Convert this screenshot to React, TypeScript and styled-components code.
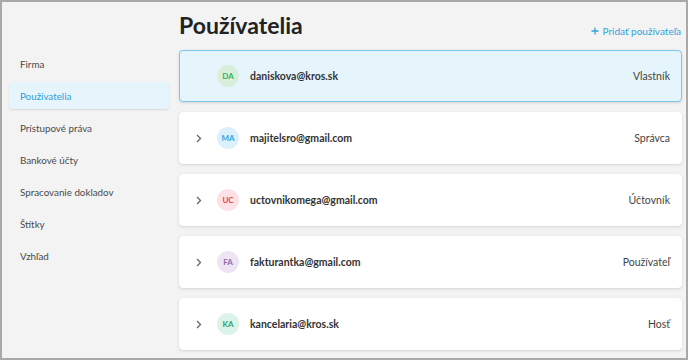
import React from "react";
import styled, { createGlobalStyle } from "styled-components";

const Global = createGlobalStyle`
  html, body { margin: 0; padding: 0; background: #ffffff; }
  * { box-sizing: border-box; }
  body { font-family: Lato, "Noto Sans", sans-serif; }
`;

const Frame = styled.div`
  width: 688px;
  height: 360px;
  border: 2px solid #a9a9a9;
  background: #f3f3f3;
  display: flex;
  overflow: hidden;
`;

const Sidebar = styled.nav`
  width: 168px;
  padding: 48px 0 0 7px;
  display: flex;
  flex-direction: column;
  gap: 5px;
`;

const NavItem = styled.div<{ $active?: boolean }>`
  width: 160px;
  height: 27px;
  display: flex;
  align-items: center;
  padding-left: 11px;
  font-size: 9.8px;
  font-weight: 400;
  color: ${(p) => (p.$active ? "#2a9fd8" : "#4a4a4a")};
  background: ${(p) => (p.$active ? "#e6f4fc" : "transparent")};
  border-radius: 3px;
  box-shadow: ${(p) => (p.$active ? "0 1px 2px rgba(0,0,0,0.12)" : "none")};
`;

const Main = styled.main`
  flex: 1;
  padding: 0 4px 0 9px;
  display: flex;
  flex-direction: column;
`;

const Header = styled.div`
  height: 48px;
  display: flex;
  align-items: flex-end;
  justify-content: space-between;
  padding-bottom: 13px;
`;

const Title = styled.h1`
  margin: 0;
  font-size: 23px;
  font-weight: 700;
  color: #222222;
  line-height: 1;
`;

const AddLink = styled.a`
  font-size: 10px;
  font-weight: 400;
  color: #2ea3dc;
  display: flex;
  align-items: center;
  gap: 4px;
  margin-right: 1px;
  margin-bottom: 0;
`;

const List = styled.div`
  display: flex;
  flex-direction: column;
  gap: 10px;
`;

const Card = styled.div<{ $selected?: boolean }>`
  height: 52px;
  display: flex;
  align-items: center;
  padding: 0 11px 0 14px;
  border-radius: 4px;
  background: ${(p) => (p.$selected ? "#e6f5fc" : "#ffffff")};
  border: 1px solid ${(p) => (p.$selected ? "#7cc6ea" : "#ffffff")};
  box-shadow: 0 1px 3px rgba(0, 0, 0, 0.13);
`;

const Chevron = styled.div`
  width: 10px;
  display: flex;
  align-items: center;
  justify-content: center;
  margin-right: 13px;
  color: #666;
`;

const Avatar = styled.div<{ $bg: string; $fg: string }>`
  width: 22px;
  height: 22px;
  border-radius: 50%;
  background: ${(p) => p.$bg};
  color: ${(p) => p.$fg};
  font-size: 8px;
  font-weight: 700;
  display: flex;
  align-items: center;
  justify-content: center;
  margin-right: 11px;
`;

const Email = styled.div`
  flex: 1;
  font-size: 10.5px;
  font-weight: 700;
  color: #333333;
`;

const Role = styled.div`
  font-size: 10.5px;
  font-weight: 400;
  color: #444444;
`;

const nav = [
  "Firma",
  "Používatelia",
  "Prístupové práva",
  "Bankové účty",
  "Spracovanie dokladov",
  "Štítky",
  "Vzhľad",
];

const users = [
  { init: "DA", email: "daniskova@kros.sk", role: "Vlastník", bg: "#d9efdc", fg: "#39b157", selected: true },
  { init: "MA", email: "majitelsro@gmail.com", role: "Správca", bg: "#dcf0fb", fg: "#36a3dc" },
  { init: "UC", email: "uctovnikomega@gmail.com", role: "Účtovník", bg: "#fde1e4", fg: "#e0444e" },
  { init: "FA", email: "fakturantka@gmail.com", role: "Používateľ", bg: "#ede5f3", fg: "#8d6aa6" },
  { init: "KA", email: "kancelaria@kros.sk", role: "Hosť", bg: "#dbf3e8", fg: "#2aa477" },
];

export default function App() {
  return (
    <>
      <Global />
      <Frame>
        <Sidebar>
          {nav.map((n) => (
            <NavItem key={n} $active={n === "Používatelia"}>
              {n}
            </NavItem>
          ))}
        </Sidebar>
        <Main>
          <Header>
            <Title>Používatelia</Title>
            <AddLink>
              <svg width="8" height="8" viewBox="0 0 8 8">
                <path d="M4 0.5V7.5M0.5 4H7.5" stroke="#2ea3dc" strokeWidth="1.3" />
              </svg>
              Pridať používateľa
            </AddLink>
          </Header>
          <List>
            {users.map((u) => (
              <Card key={u.email} $selected={u.selected}>
                <Chevron>
                  {!u.selected && (
                    <svg width="6" height="9" viewBox="0 0 6 9">
                      <path d="M1 1L4.5 4.5L1 8" fill="none" stroke="#666" strokeWidth="1.3" />
                    </svg>
                  )}
                </Chevron>
                <Avatar $bg={u.bg} $fg={u.fg}>
                  {u.init}
                </Avatar>
                <Email>{u.email}</Email>
                <Role>{u.role}</Role>
              </Card>
            ))}
          </List>
        </Main>
      </Frame>
    </>
  );
}
